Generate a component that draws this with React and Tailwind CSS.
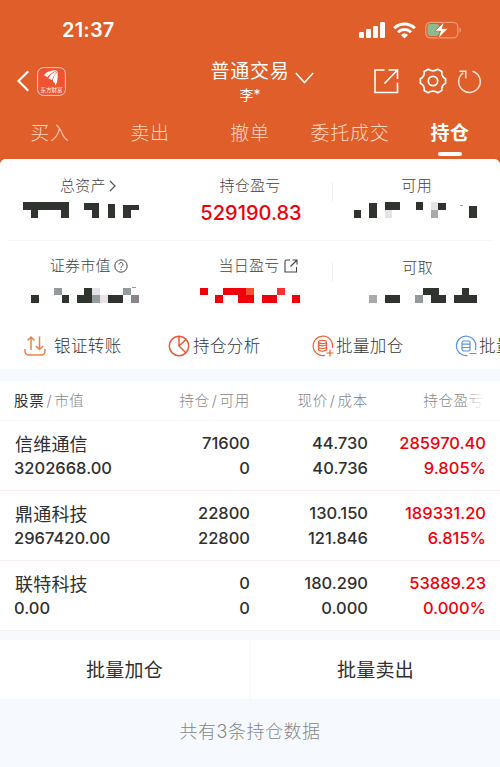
import React from 'react'

const DARK = '#30342f'
const GRAY = '#949b9f'
const SILVER = '#aaa9ab'
const PALE = '#e6e2e7'
const RED = '#f0000a'

const tabs = ['买入', '卖出', '撤单', '委托成交', '持仓']

// blocks are [x, y, width, height, color] inside a 166x18 strip
const masks = {
  total: [
    [23, 2, 46, 8, DARK], [31, 10, 7, 8, DARK], [61, 10, 8, 8, DARK],
    [84, 3, 15, 7, DARK], [92, 10, 7, 8, DARK], [108, 4, 7, 14, DARK],
    [123, 5, 16, 5, DARK], [123, 10, 8, 8, DARK],
  ],
  available: [
    [20, 10, 7, 8, DARK], [35, 3, 8, 15, DARK], [51, 2, 15, 8, DARK],
    [51, 10, 7, 8, PALE], [82, 2, 7, 8, DARK], [97, 2, 7, 8, PALE],
    [97, 10, 7, 8, SILVER], [104, 3, 8, 7, DARK], [126, 5, 3, 1, GRAY], [135, 6, 8, 12, DARK],
  ],
  market: [
    [31, 9, 8, 8, DARK], [54, 2, 8, 7, GRAY], [62, 9, 7, 8, DARK],
    [77, 9, 15, 8, DARK], [84, 2, 8, 7, DARK], [92, 2, 8, 7, PALE],
    [92, 9, 8, 8, GRAY], [100, 9, 8, 8, PALE], [108, 9, 15, 8, DARK],
    [123, 2, 8, 7, GRAY], [131, 9, 8, 8, '#88858a'], [132, 1, 4, 1, GRAY],
  ],
  today: [
    [33, 2, 8, 7, RED], [48, 9, 8, 8, RED], [56, 2, 23, 7, RED],
    [79, 2, 8, 7, '#f0522e'], [71, 9, 16, 8, RED], [95, 9, 15, 8, RED],
    [110, 2, 8, 7, '#fb3035'], [125, 9, 8, 8, RED],
  ],
  cash: [
    [35, 9, 8, 8, SILVER], [51, 9, 15, 8, DARK], [81, 9, 8, 8, GRAY],
    [89, 2, 16, 7, DARK], [97, 9, 15, 8, DARK], [120, 9, 23, 8, DARK], [128, 2, 7, 7, DARK],
  ],
}

const holdings = [
  { name: '信维通信', value: '3202668.00', hold: '71600', usable: '0', price: '44.730', cost: '40.736', profit: '285970.40', rate: '9.805%' },
  { name: '鼎通科技', value: '2967420.00', hold: '22800', usable: '22800', price: '130.150', cost: '121.846', profit: '189331.20', rate: '6.815%' },
  { name: '联特科技', value: '0.00', hold: '0', usable: '0', price: '180.290', cost: '0.000', profit: '53889.23', rate: '0.000%' },
]

const Mask = ({ blocks }) => (
  <svg width="166" height="18" viewBox="0 0 166 18" shapeRendering="crispEdges">
    {blocks.map(([x, y, w, h, fill], i) => (
      <rect key={i} x={x} y={y} width={w} height={h} fill={fill} />
    ))}
  </svg>
)

const StatusBar = () => (
  <div className="flex h-[58px] items-center justify-between pt-[2px] pr-[38px] pl-[62px]">
    <span className="text-[20px] font-semibold leading-none tracking-[0.2px]">21:37</span>
    <div className="flex items-center">
      <svg width="26" height="16" viewBox="0 0 26 16" fill="currentColor">
        <rect x="0" y="10" width="5" height="6" rx="1.2" />
        <rect x="7" y="7" width="5" height="9" rx="1.2" />
        <rect x="14" y="4" width="5" height="12" rx="1.2" />
        <rect x="21" y="0" width="5" height="16" rx="1.2" />
      </svg>
      <svg className="ml-[8px]" width="23" height="17" viewBox="0 0 23 17" fill="none" stroke="currentColor" strokeWidth="3">
        <path d="M1.2 6.2a14.7 14.7 0 0 1 20.6 0" />
        <path d="M5 10.2a9.3 9.3 0 0 1 13 0" />
        <path d="M11.5 16.4 8 12.9a5 5 0 0 1 7 0z" fill="currentColor" stroke="none" />
      </svg>
      <svg className="ml-[9px]" width="37" height="18" viewBox="0 0 37 18">
        <rect x="0.8" y="1.3" width="32" height="15.6" rx="4.6" fill="none" stroke="#f09c7b" strokeWidth="1.2" />
        <path d="M34.5 6.6v5.2c1.9-.9 1.9-4.3 0-5.2z" fill="#f0a588" />
        <rect x="2.5" y="3" width="11.5" height="12" rx="2.4" fill="#8dba8c" />
        <path d="M19.5 0.5 9.8 10.2h5.7L13 17.8l10-10.2h-5.8z" fill="#fff" stroke="#df5e29" strokeWidth="0.8" />
      </svg>
    </div>
  </div>
)

const Logo = () => (
  <svg width="29" height="29" viewBox="0 0 29 29">
    <rect x="0.6" y="0.6" width="27.8" height="27.8" rx="6" fill="#ef5330" stroke="#f8cdbb" strokeWidth="1" />
    <path d="M7 8.2C9 4.7 14.5 3.2 20.2 3.3 17 4.3 11.5 7.8 10.6 10.3 9.4 9.4 8.4 8.7 7 8.2z" fill="#fff" />
    <path d="M11.4 11.6C12.5 8.5 16.500 5.2 20.6 3.8 18 6.8 15.5 10 15.2 13.3 14 12.4 12.9 12 11.4 11.6z" fill="#fff" />
    <path d="M15.9 14.6C15.8 10.8 18 7 20.8 4.2 20.5 7.5 21.5 14 18.4 18.5 18.2 16.7 17.3 15.5 15.9 14.6z" fill="#fff" />
    <text x="14.5" y="25" textAnchor="middle" fontSize="5.5" fill="#fff" textLength="22">东方财富</text>
  </svg>
)

const TitleBar = () => (
  <div className="grid h-[46px] grid-cols-3 items-center">
    <div className="flex items-center gap-[8px] pl-[17px]">
      <svg width="12" height="22" viewBox="0 0 12 22" fill="none" stroke="currentColor" strokeWidth="2.2">
        <path d="M11.3 1.2 1.5 11l9.8 9.8" />
      </svg>
      <Logo />
    </div>
    <div className="flex flex-col items-center">
      <div className="flex h-[26px] items-center pl-[25px]">
        <span className="text-[19px] leading-none tracking-[0.7px]">普通交易</span>
        <svg className="mt-[13px] ml-[6px]" width="19" height="12" viewBox="0 0 19 12" fill="none" stroke="currentColor" strokeWidth="1.5">
          <path d="m.8 1 8.7 9.600L18.2 1" />
        </svg>
      </div>
      <span className="h-[20px] text-[14px] leading-[21px]">李*</span>
    </div>
    <div className="flex items-center justify-end pr-[18px]">
      <svg width="26" height="26" viewBox="0 0 26 26" fill="none" stroke="currentColor" strokeWidth="1.6">
        <path d="M11.5 2H2v22.5h22.5V14.5M15.5 2h9v9M24.5 2 11.5 15.5" />
      </svg>
      <svg className="ml-[20px]" width="28" height="26" viewBox="0 0 28 26" fill="none" stroke="currentColor" strokeWidth="1.7" strokeLinejoin="round">
        <path d="M9.2 1.3Q14 4.5 18.8 1.3L22.8 3.6Q22.2 8.6 26.600 10.8V15.2Q22.2 17.4 22.8 22.4L18.8 24.7Q14 21.5 9.2 24.7L5.2 22.4Q5.8 17.4 1.4 15.2V10.8Q5.8 8.6 5.2 3.6Z" />
        <circle cx="14" cy="13" r="4.7" />
      </svg>
      <svg className="ml-[10px]" width="25" height="25" viewBox="0 0 25 25" fill="none" stroke="#ffe4d8" strokeWidth="1.5">
        <path d="M15.5 2.3a10.8 10.8 0 1 1-9.2 1.5M2.500 2.2h6.300v7" />
      </svg>
    </div>
  </div>
)

const Tabs = () => (
  <div className="grid h-[55px] grid-cols-5">
    {tabs.map((tab) => {
      const active = tab === '持仓'
      return (
        <div key={tab} className="flex flex-col items-center">
          <span className={active ? 'mt-[15px] text-[19px] font-bold leading-[30px] tracking-[0.5px]' : 'mt-[15px] text-[19px] font-light leading-[30px] tracking-[0.7px] whitespace-nowrap text-[#ffd6c4]'}>
            {tab}
          </span>
          {active && <span className="mt-[3px] h-[4px] w-[24px] rounded-full bg-white" />}
        </div>
      )
    })}
  </div>
)

const Cell = ({ label, icon, border, labelClass = 'mt-[15px]', children }) => (
  <div className="relative flex flex-col items-center">
    <div className={`flex h-[22px] items-center text-[15px] font-light tracking-[0.3px] text-[#444] ${labelClass}`}>
      {label}
      {icon}
    </div>
    {children}
    {border && <span className="absolute top-[22px] right-0 h-[19px] w-px bg-[#eeeeee]" />}
  </div>
)

const Summary = () => (
  <div className="bg-white">
    <div className="grid h-[81px] grid-cols-3 pt-[1px]">
      <Cell
        label="总资产"
        labelClass="mt-[15px] pl-[9px]"
        icon={
          <svg className="ml-[3px]" width="7" height="12" viewBox="0 0 7 12" fill="none" stroke="#555" strokeWidth="1.2">
            <path d="m1 1 5 5-5 5" />
          </svg>
        }
      >
        <div className="mt-[3px]"><Mask blocks={masks.total} /></div>
      </Cell>
      <Cell label="持仓盈亏" border>
        <span className="mt-[3px] pl-[2px] text-[20px] font-medium leading-[26px] text-[#f0000a]">529190.83</span>
      </Cell>
      <Cell label="可用">
        <div className="mt-[3px]"><Mask blocks={masks.available} /></div>
      </Cell>
    </div>
    <div className="mx-[6px] h-px bg-[#f7f7f7]" />
    <div className="grid h-[80px] grid-cols-3">
      <Cell
        label="证券市值"
        labelClass="mt-[14px] mb-px pl-[11px]"
        icon={
          <svg className="ml-[3px]" width="14" height="14" viewBox="0 0 14 14" fill="none" stroke="#444" strokeWidth="1">
            <circle cx="7" cy="7" r="6.2" />
            <path d="M5 5.5a2 2 0 1 1 3.200 1.6c-.8.6-1.2.9-1.2 1.7M7 10v1.200" />
          </svg>
        }
      >
        <div className="mt-[8px]"><Mask blocks={masks.market} /></div>
      </Cell>
      <Cell
        label="当日盈亏"
        border
        labelClass="mt-[14px] mb-px pl-[16px]"
        icon={
          <svg className="ml-[4px]" width="14" height="14" viewBox="0 0 14 14" fill="none" stroke="#444" strokeWidth="1.1">
            <path d="M6 1H2.500Q1 1 1 2.500V13h11.500V8M8.500 1H13v4.500M13 1 6.500 7.500" />
          </svg>
        }
      >
        <div className="mt-[8px]"><Mask blocks={masks.today} /></div>
      </Cell>
      <Cell label="可取" labelClass="mt-[16px] -mb-px pl-[2px]">
        <div className="mt-[8px]"><Mask blocks={masks.cash} /></div>
      </Cell>
    </div>
  </div>
)

const Actions = () => (
  <div className="flex h-[48px] items-center overflow-hidden bg-white pt-[2px] text-[16.5px] font-light tracking-[0.4px] whitespace-nowrap text-[#333]">
    <div className="flex w-[144px] shrink-0 items-center gap-[8px] pl-[24px]">
      <svg width="22" height="22" viewBox="0 0 22 22" fill="none" stroke="#ee8347" strokeWidth="1.5">
        <path d="M1 14v2q0 4 4 4h12q4 0 4-4v-2M7 15V2M3.500 5.500 7 2l3.500 3.500M15.500 1.500v13M12 11l3.500 3.500L19 11" />
      </svg>
      银证转账
    </div>
    <div className="flex w-[144px] shrink-0 items-center gap-[3px] pl-[24px]">
      <svg width="22" height="22" viewBox="0 0 22 22" fill="none" stroke="#eb5a36" strokeWidth="1.5">
        <circle cx="11" cy="11" r="9.7" />
        <path d="M11 1.3V11l6.8 6.8M11.500 10.500l6.500-6" />
      </svg>
      持仓分析
    </div>
    <div className="flex w-[143px] shrink-0 items-center gap-[2px] pl-[24px]">
      <svg width="22" height="22" viewBox="0 0 22 22" fill="none" stroke="#eb6238" strokeWidth="1.2">
        <path d="M13 20.300A9.700 9.700 0 1 1 20.300 13" />
        <ellipse cx="10.500" cy="7" rx="4" ry="1.600" />
        <path d="M6.500 7v8q4 2.500 8 0V7M6.500 9.800q4 2 8 0M6.500 12.500q4 2 8 0M18 14.500v7M14.500 18h7" />
      </svg>
      批量加仓
    </div>
    <div className="flex shrink-0 items-center gap-[2px] pl-[24px]">
      <svg width="22" height="22" viewBox="0 0 22 22" fill="none" stroke="#5592e6" strokeWidth="1.2">
        <path d="M12.500 20.500A9.700 9.700 0 1 1 20.600 13v2M14.500 18.500h7" />
        <rect x="7" y="6" width="8" height="10" rx="1.500" />
        <path d="M7 9.200h8M7 12.500h8" />
      </svg>
      批量卖出
    </div>
  </div>
)

const TableHead = () => (
  <div className="grid h-[40px] grid-cols-[130px_106px_118px_116px] border-b border-[#f5f5f5] bg-white pl-[14px] text-[14.5px] font-light leading-[40px] tracking-[0.7px] whitespace-nowrap text-[#85878a]">
    <div><span className="font-normal text-[#333]">股票</span><span className="mx-[2px]">/</span>市值</div>
    <div className="text-right">持仓<span className="mx-[2px]">/</span>可用</div>
    <div className="text-right">现价<span className="mx-[2px]">/</span>成本</div>
    <div className="relative text-right">
      持仓盈亏
      <span className="absolute top-0 right-0 h-[38px] w-[20px] bg-linear-to-r from-white/0 to-white" />
    </div>
  </div>
)

const HoldingRow = ({ item }) => (
  <div className="grid h-[70px] grid-cols-[130px_106px_118px_118px] border-b border-[#f8efef] bg-white pt-[10px] pl-[14px] text-[16.5px] font-medium leading-[24px] text-[#303030]">
    <div>
      <p className="h-[25px] pl-px text-[18px] font-normal leading-[28px] tracking-[0.2px]">{item.name}</p>
      <p>{item.value}</p>
    </div>
    <div className="text-right">
      <p className="h-[25px]">{item.hold}</p>
      <p>{item.usable}</p>
    </div>
    <div className="text-right">
      <p className="h-[25px]">{item.price}</p>
      <p>{item.cost}</p>
    </div>
    <div className="text-right text-[#f0000a]">
      <p className="h-[25px]">{item.profit}</p>
      <p>{item.rate}</p>
    </div>
  </div>
)

const App = () => {
  return (
    <div className="h-[767px] w-[500px] overflow-hidden bg-[#f6faff] font-['Inter','Noto_Sans_CJK_SC',sans-serif]">
      <div className="bg-[#df5e29] text-white">
        <StatusBar />
        <TitleBar />
        <Tabs />
        <div className="overflow-hidden rounded-t-[6px] bg-white">
          <Summary />
          <Actions />
        </div>
      </div>
      <div className="mt-[12px]">
        <TableHead />
        {holdings.map((item) => (
          <HoldingRow key={item.name} item={item} />
        ))}
      </div>
      <div className="mt-[9px] grid h-[59px] grid-cols-2 gap-[2px] text-center text-[19px] leading-[61px] tracking-[0.3px] text-[#303030]">
        <div className="h-[59px] bg-white">批量加仓</div>
        <div className="h-[59px] bg-white">批量卖出</div>
      </div>
      <p className="mt-[18px] text-center text-[18px] font-light leading-[30px] tracking-[0.5px] text-[#85878a]">共有3条持仓数据</p>
    </div>
  )
}

export default App
